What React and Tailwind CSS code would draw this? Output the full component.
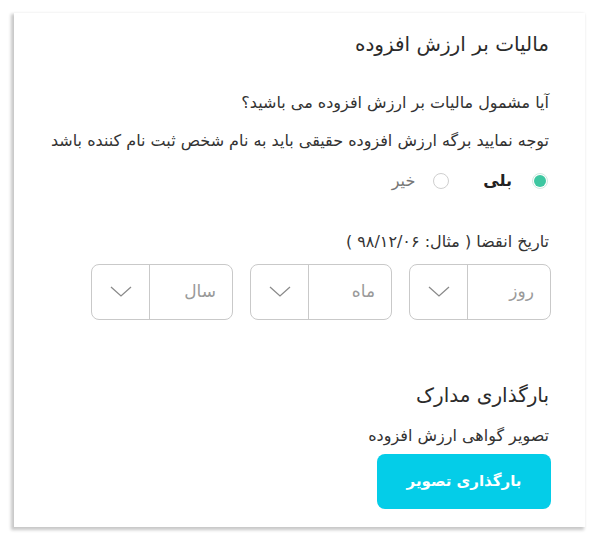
import React from 'react';

const Chevron = () => (
  <svg width="24" height="14" viewBox="0 0 24 14" fill="none" stroke="#8a8a8a" strokeWidth="1.3">
    <path d="M2 2 L12 11 L22 2" />
  </svg>
);

const DateSelect = ({ label }) => (
  <div className="flex h-[56px] w-[142px] rounded-lg border border-[#c9c9c9] bg-white">
    <div className="flex flex-1 items-center pr-[16px] text-[17px] text-[#9a9a9a]">{label}</div>
    <div className="flex w-[58px] items-center justify-center border-r border-[#c9c9c9]">
      <Chevron />
    </div>
  </div>
);

export default function App() {
  return (
    <div className="h-[540px] w-[600px] bg-white pt-[13px] pl-[14px]" style={{ fontFamily: '"DejaVu Sans", "Noto Sans", sans-serif' }}>
      <div
        dir="rtl"
        className="h-[514px] w-[571px] bg-white pr-[34px] pt-[16px] text-[#333] shadow-[-2px_2px_3px_1px_rgba(0,0,0,0.22)]"
      >
        <div className="pr-[2px]">
          <h2 className="text-[20px] leading-[30px] text-[#2b2b2b]">مالیات بر ارزش افزوده</h2>

          <p className="mt-[32px] text-[16px] leading-[24px]">آیا مشمول مالیات بر ارزش افزوده می باشید؟</p>
          <p className="mt-[14px] text-[16px] leading-[24px]">توجه نمایید برگه ارزش افزوده حقیقی باید به نام شخص ثبت نام کننده باشد</p>

          <div className="mt-[16px] flex h-[24px] items-center pr-[1px] text-[16px]">
            <span className="flex h-[16px] w-[16px] items-center justify-center rounded-full border border-[#cfe9e0]">
              <span className="h-[12px] w-[12px] rounded-full bg-[#3dc7a1]" />
            </span>
            <span className="mr-[20px] font-bold text-[#222]">بلی</span>
            <span className="mr-[34px] h-[16px] w-[16px] rounded-full border border-[#cfcfcf]" />
            <span className="mr-[18px] text-[#777]">خیر</span>
          </div>

          <p className="mt-[37px] text-[16px] leading-[24px]">تاریخ انقضا ( مثال: ۹۸/۱۲/۰۶ )</p>
        </div>

        <div className="mt-[10px] flex gap-[17px]">
          <DateSelect label="روز" />
          <DateSelect label="ماه" />
          <DateSelect label="سال" />
        </div>

        <div className="pr-[2px]">
          <h2 className="mt-[60px] text-[20px] leading-[30px] text-[#2b2b2b]">بارگذاری مدارک</h2>
          <p className="mt-[14px] text-[16px] leading-[24px]">تصویر گواهی ارزش افزوده</p>
        </div>

        <button className="mt-[6px] h-[55px] w-[174px] rounded-lg bg-[#04cde8] text-[15px] font-bold text-white">
          بارگذاری تصویر
        </button>
      </div>
    </div>
  );
}
